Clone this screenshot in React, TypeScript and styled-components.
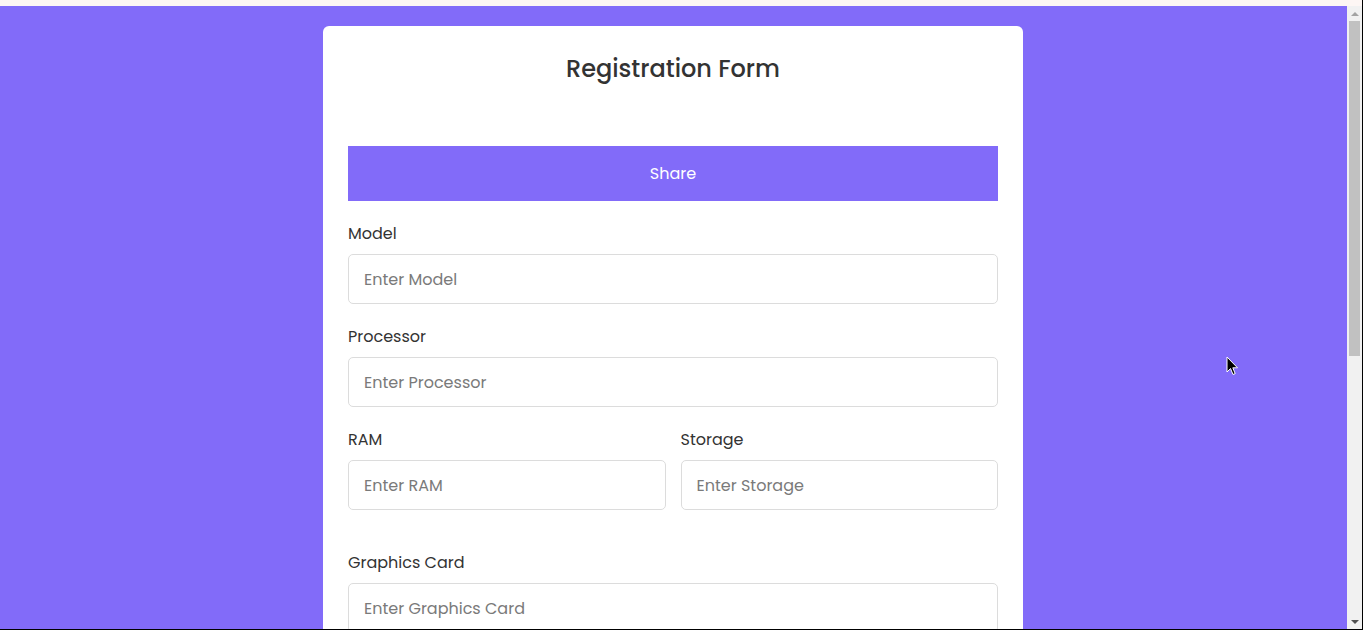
import React from "react";
import styled, { createGlobalStyle } from "styled-components";

const Global = createGlobalStyle`
  html, body { margin: 0; padding: 0; height: 100%; overflow: hidden; }
  body {
    background: #fdf6f4;
    font-family: "Poppins", "Inter", "Noto Sans", sans-serif;
  }
  * { box-sizing: border-box; }
`;

const Viewport = styled.div`
  position: relative;
  height: 630px;
  display: flex;
  flex-direction: column;
  border-right: 1px solid #000;
  border-bottom: 1px solid #000;
  padding-top: 6px;
  background: #fdf6f4;
`;

const Body = styled.div`
  flex: 1;
  min-height: 0;
  display: flex;
`;

const Main = styled.div`
  flex: 1;
  min-width: 0;
  overflow: hidden;
  background: #826bf9;
`;

const Page = styled.div`
  padding: 20px 1px 40px 0;
  display: flex;
  justify-content: center;
  align-items: flex-start;
`;

const ScrollTrack = styled.div`
  width: 15px;
  background: #f1f1f1;
  display: flex;
  flex-direction: column;
  align-items: center;
  padding: 0 2px;
`;

const Arrow = styled.div<{ $down?: boolean }>`
  height: 15px;
  display: flex;
  align-items: center;
  justify-content: center;
  &::before {
    content: "";
    border-left: 4px solid transparent;
    border-right: 4px solid transparent;
    ${(p) =>
      p.$down
        ? "border-top: 4px solid #505050;"
        : "border-bottom: 4px solid #a3a3a3;"}
  }
`;

const Thumb = styled.div`
  width: 11px;
  height: 335px;
  background: #c1c1c1;
`;

const Spacer = styled.div`
  flex: 1;
`;

const Card = styled.div`
  width: 700px;
  background: #fff;
  border-radius: 6px;
  padding: 25px 25px 30px;
  display: flex;
  flex-direction: column;
`;

const Title = styled.h1`
  margin: 0 0 59px;
  text-align: center;
  font-size: 24px;
  line-height: 36px;
  font-weight: 500;
  color: #333;
`;

const ShareButton = styled.button`
  height: 55px;
  border: none;
  background: #826bf9;
  color: #fff;
  font-family: inherit;
  font-size: 16px;
  margin-bottom: 21px;
  cursor: pointer;
`;

const Row = styled.div<{ $gap?: number }>`
  display: grid;
  grid-template-columns: minmax(0, 1fr) minmax(0, 1fr);
  column-gap: 15px;
  margin-bottom: ${(p) => p.$gap ?? 21}px;
`;

const Field = styled.div<{ $gap?: number }>`
  display: flex;
  flex-direction: column;
  min-width: 0;
  margin-bottom: ${(p) => p.$gap ?? 21}px;
`;

const Label = styled.label`
  font-size: 16px;
  line-height: 24px;
  color: #333;
  margin-bottom: 8px;
`;

const Input = styled.input`
  width: 100%;
  min-width: 0;
  height: 50px;
  border: 1px solid #dcdcdc;
  border-radius: 5px;
  padding: 0 15px;
  font-family: inherit;
  font-size: 16px;
  color: #333;
  outline: none;
  &::placeholder { color: #7a7a7a; }
`;

const SubmitButton = styled.button`
  height: 50px;
  border: none;
  border-radius: 5px;
  background: #826bf9;
  color: #fff;
  font-family: inherit;
  font-size: 16px;
  margin-top: 10px;
`;

const Cursor = styled.svg`
  position: absolute;
  left: 1226px;
  top: 356px;
  width: 13px;
  height: 21px;
`;

export default function App() {
  return (
    <>
      <Global />
      <Viewport>
        <Body>
          <Main>
            <Page>
              <Card>
                <Title>Registration Form</Title>
                <ShareButton>Share</ShareButton>
                <Field>
                  <Label>Model</Label>
                  <Input placeholder="Enter Model" />
                </Field>
                <Field>
                  <Label>Processor</Label>
                  <Input placeholder="Enter Processor" />
                </Field>
                <Row $gap={41}>
                  <Field $gap={0}>
                    <Label>RAM</Label>
                    <Input placeholder="Enter RAM" />
                  </Field>
                  <Field $gap={0}>
                    <Label>Storage</Label>
                    <Input placeholder="Enter Storage" />
                  </Field>
                </Row>
                <Field>
                  <Label>Graphics Card</Label>
                  <Input placeholder="Enter Graphics Card" />
                </Field>
                <Field>
                  <Label>Display</Label>
                  <Input placeholder="Enter Display" />
                </Field>
                <Field>
                  <Label>Email</Label>
                  <Input placeholder="Enter Email" />
                </Field>
                <SubmitButton>Submit</SubmitButton>
              </Card>
            </Page>
          </Main>
          <ScrollTrack>
            <Arrow />
            <Thumb />
            <Spacer />
            <Arrow $down />
          </ScrollTrack>
        </Body>
        <Cursor viewBox="0 0 13 21">
          <path
            d="M1 1 L1 16 L4.5 12.5 L7 18.5 L9.2 17.6 L6.8 11.8 L11.5 11.8 Z"
            fill="#000"
            stroke="#fff"
            strokeWidth="1"
            strokeLinejoin="round"
          />
        </Cursor>
      </Viewport>
    </>
  );
}
